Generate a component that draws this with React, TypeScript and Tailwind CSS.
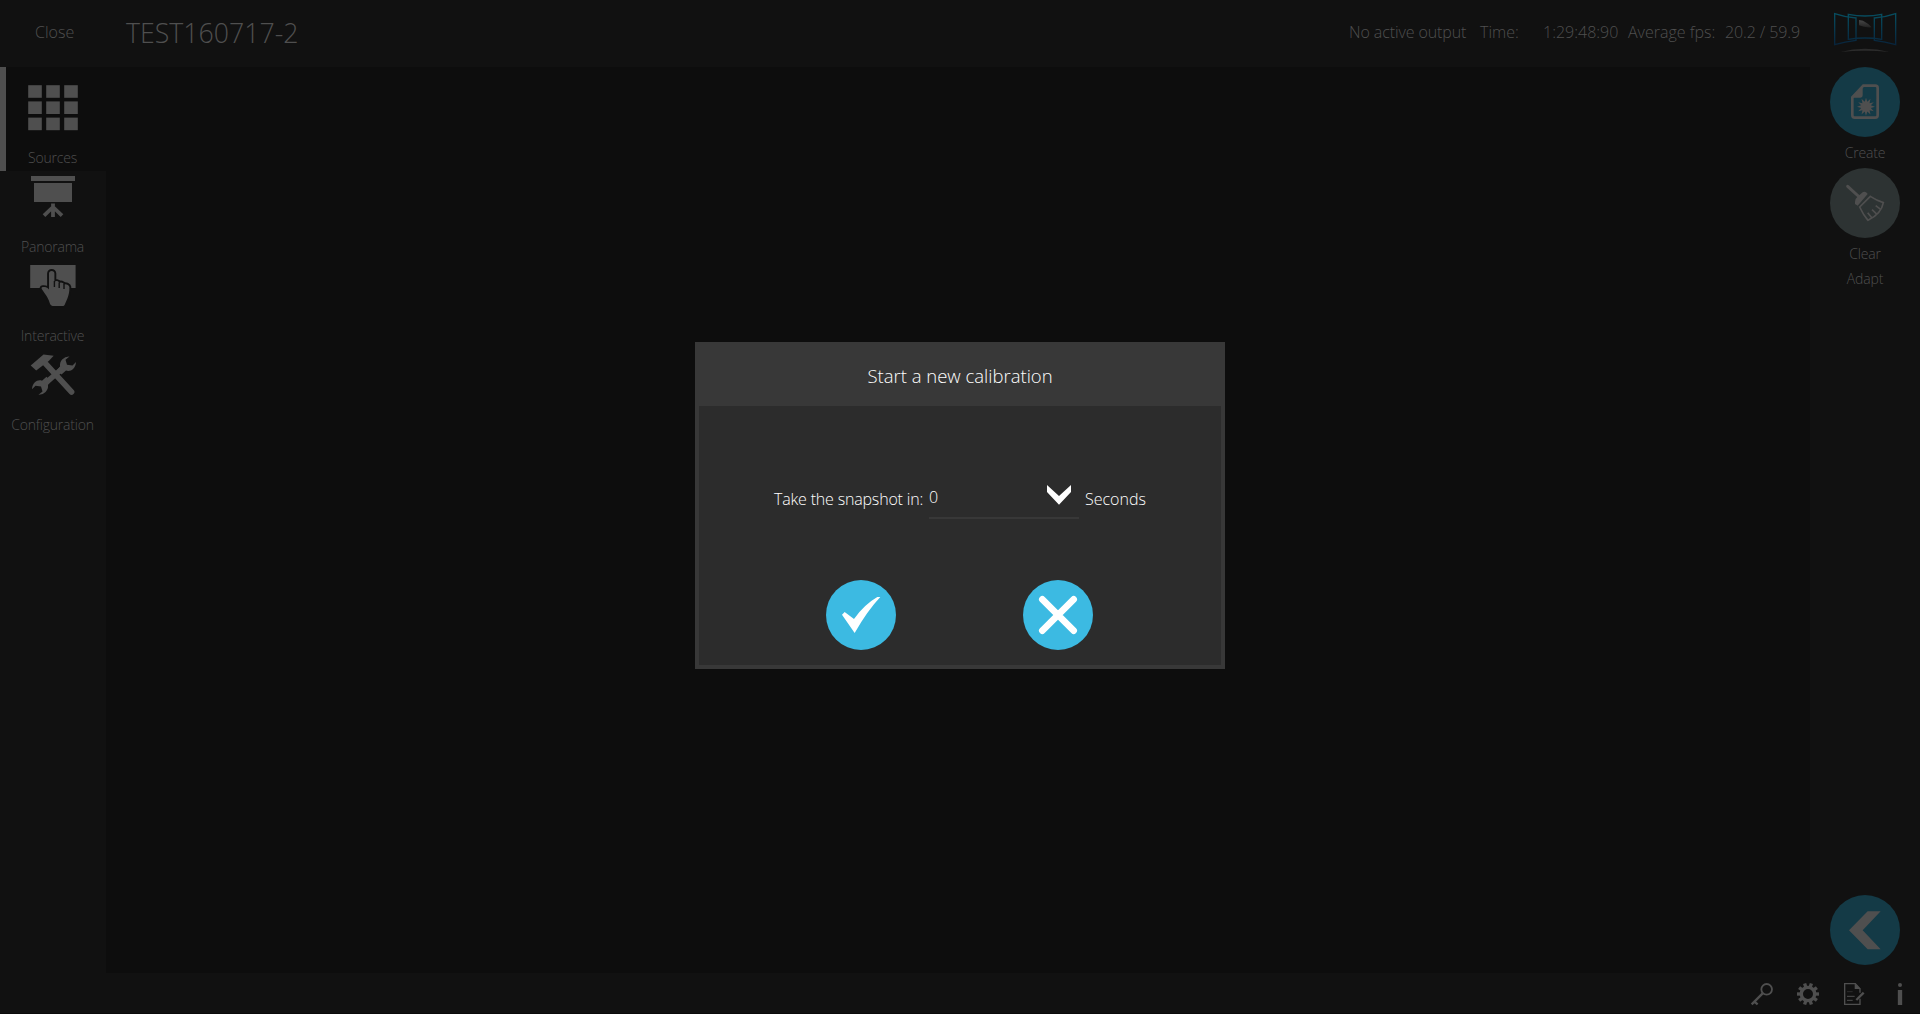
import type { ReactNode } from 'react'

const FONT = "font-['Open_Sans',sans-serif] font-light"

// points of a star outline around (cx, cy)
function starPoints(cx: number, cy: number, outer: number, inner: number, count: number) {
  return Array.from({ length: count * 2 }, (_, i) => {
    const r = i % 2 === 0 ? outer : inner
    const a = (Math.PI * i) / count - Math.PI / 2
    return `${(cx + r * Math.cos(a)).toFixed(1)},${(cy + r * Math.sin(a)).toFixed(1)}`
  }).join(' ')
}

function SourcesIcon() {
  return (
    <svg viewBox="0 0 60 60" className="size-[60px] shrink-0" fill="#4f4f4f">
      {[0, 1, 2].map((row) =>
        [0, 1, 2].map((col) => (
          <rect key={`${row}${col}`} x={5.2 + col * 18} y={3.2 + row * 16.2} width="13.6" height="12.6" />
        ))
      )}
    </svg>
  )
}

function PanoramaIcon() {
  return (
    <svg viewBox="0 0 60 60" className="size-[60px] shrink-0" fill="#4f4f4f">
      <rect x="8" y="5" width="44" height="5" />
      <rect x="11" y="12" width="38" height="19" />
      <path d="M30 32.5V46M30 36l-9 8.6M30 36l9 8.600" stroke="#4f4f4f" strokeWidth="3.8" fill="none" />
    </svg>
  )
}

function InteractiveIcon() {
  return (
    <svg viewBox="0 0 60 60" className="size-[60px] shrink-0" fill="#4f4f4f">
      <rect x="7.2" y="5" width="45.4" height="23" />
      <path
        d="M26 28V13.6a2.6 2.6 0 0 1 5.4 0V22c1-1.6 4.3-1.2 4.8.9 1.4-1 4.3-.5 4.8 1.5 1.5-.8 5.2.2 5.4 2.6.2 4-.6 8-2 11.500l-2.200 5c-.5 1.600-1 2.400-2 2.400H29.500c-1.500 0-2.300-1.200-2.800-2.800-.8-3-2.200-6-4.200-8.600l-3.600-5.200c-.8-1.300-.4-2 1-2.200 2.300-.2 4.400.3 6.100 2.300Z"
        stroke="#111111"
        strokeWidth="3.8"
        paintOrder="stroke"
      />
      <path d="M31.400 21v6M36.200 22.500v5.500M41 24v5" stroke="#111111" strokeWidth="1.400" />
    </svg>
  )
}

function ConfigurationIcon() {
  const jaw = 'M46.500 7.500A9 9 0 0 0 37 17.500L34 21l4.500 4.500 4.500-4C47 23 52.500 20.500 53 13l-3.500 3.500-5.500-.8-1.500-5z'
  return (
    <svg viewBox="0 0 60 60" className="size-[60px] shrink-0" fill="#4f4f4f">
      <path d={jaw} />
      <path d={jaw} transform="rotate(180 31 26.600)" />
      <path d="M40 19L22 34.500" stroke="#4f4f4f" strokeWidth="5.600" />
      <path d="M22 14L48.600 43" stroke="#4f4f4f" strokeWidth="5.600" strokeLinecap="round" />
      <path d="M7.700 16.500L20.500 5.400l10.200 1.300-4.700 5-12.800 9.700z" />
    </svg>
  )
}

function Logo() {
  return (
    <svg viewBox="0 0 360 171" className="w-[120px] h-[57px]" fill="none">
      <defs>
        <linearGradient id="frame" gradientUnits="userSpaceOnUse" x1="0" y1="40" x2="0" y2="134">
          <stop offset="0" stopColor="#074e60" />
          <stop offset="1" stopColor="#08243c" />
        </linearGradient>
        <linearGradient id="leaf" x1="0" y1="0" x2="0" y2="1">
          <stop offset="0" stopColor="#474747" />
          <stop offset="1" stopColor="#222222" />
        </linearGradient>
      </defs>
      <g stroke="url(#frame)" strokeWidth="4">
        <path d="M104 41Q136 52 168 54V121Q136 125 104 134Z" />
        <path d="M287 41Q255 52 223 54V121Q255 125 287 134Z" />
        <path d="M145 43Q195 53 245 43V118Q195 110 145 118Z" />
      </g>
      <path d="M177 60l12 2q16 8 26 20-20 2-38-6z" fill="url(#leaf)" />
      <path d="M122 156q73-20 146 0-73-8-146 0z" fill="#2b2b2b" />
    </svg>
  )
}

function CreateIcon() {
  return (
    <svg viewBox="0 0 210 210" className="size-[70px]">
      <path d="M100 56H136q7 0 7 7V145q0 7-7 7H74q-7 0-7-7V91z" fill="none" stroke="#4f4f4f" strokeWidth="8" />
      <path d="M98 54V84q0 8-8 8H66z" fill="#4f4f4f" />
      <polygon points={starPoints(108, 119, 27, 15, 12)} fill="#4f4f4f" />
    </svg>
  )
}

function BroomIcon() {
  return (
    <svg viewBox="0 0 210 210" className="size-[70px]" fill="none" stroke="#4f4f4f">
      <path d="M53 55L88 87" strokeWidth="9" strokeLinecap="round" />
      <path d="M75 101q0-9 7-14l14-13q7-5 14 0l3 4-30 35-8-5z" fill="#4f4f4f" stroke="none" />
      <path d="M89 117L121 85Q141 98 160 104Q154 138 114 157Q100 141 89 117Z" strokeWidth="5" />
      <path d="M113 134l13 16M126 125l15 14M137 113l15 11" strokeWidth="5" />
    </svg>
  )
}

function BackIcon() {
  return (
    <svg viewBox="0 0 210 210" className="size-[70px]" fill="#4f4f4f">
      <path d="M57 106L113 49H152L98 106L152 163H113Z" />
    </svg>
  )
}

function CheckIcon() {
  return (
    <svg viewBox="0 0 210 210" className="size-[70px]" fill="#ffffff">
      <path d="M48 104L56 96L84 117Q114 74 154 51H163Q124 92 86 159Z" />
    </svg>
  )
}

function CrossIcon() {
  return (
    <svg viewBox="0 0 210 210" className="size-[70px]">
      <path d="M58 58L152 152M152 58L58 152" stroke="#ffffff" strokeWidth="20" strokeLinecap="round" />
    </svg>
  )
}

const navItems: { label: string; icon: ReactNode }[] = [
  { label: 'Panorama', icon: <PanoramaIcon /> },
  { label: 'Interactive', icon: <InteractiveIcon /> },
  { label: 'Configuration', icon: <ConfigurationIcon /> },
]

function NavItem({ label, icon }: { label: string; icon: ReactNode }) {
  return (
    <div className="h-[89px] flex flex-col items-center">
      {icon}
      <span className="h-8 shrink-0 leading-[31px] pr-px text-[14px] tracking-[-0.2px]">{label}</span>
    </div>
  )
}

function FooterIcons() {
  return (
    <div className="h-[41px] flex justify-end gap-[22px] pt-[9px] pr-2 border-b border-[#0a0a0a]">
      <svg viewBox="0 0 72 72" className="size-6" fill="none" stroke="#4f4f4f">
        <circle cx="50" cy="22" r="16" strokeWidth="5.500" />
        <path d="M38 34L5 67M12 58l11 9" strokeWidth="7" />
      </svg>
      <svg viewBox="0 0 72 72" className="size-6">
        <circle cx="36" cy="36" r="20" fill="none" stroke="#4f4f4f" strokeWidth="10" />
        {Array.from({ length: 10 }, (_, i) => (
          <rect key={i} x="31" y="3" width="10" height="12" fill="#4f4f4f" transform={`rotate(${i * 36 + 18} 36 36)`} />
        ))}
      </svg>
      <svg viewBox="0 0 72 72" className="size-6" fill="none" stroke="#4f4f4f">
        <path d="M54 50V67H8V5H40L54 20V32" strokeWidth="4" />
        <path d="M38 4V21H56z" fill="#4f4f4f" stroke="none" />
        <path d="M15 43H38M15 55H32" strokeWidth="3" />
        <path d="M15 29H32" stroke="#2c2c2c" strokeWidth="3" />
        <path d="M43 54L65 32" strokeWidth="7" />
      </svg>
      <svg viewBox="0 0 72 72" className="size-6" fill="#4f4f4f">
        <circle cx="36" cy="9" r="6" />
        <rect x="29.500" y="24" width="13" height="45" />
      </svg>
    </div>
  )
}

function CalibrationDialog() {
  return (
    <div className="absolute left-[695px] top-[342px] w-[530px] h-[327px] flex flex-col bg-[#383838] px-1 pb-1 text-white">
      <h2 className="h-16 leading-[67px] text-center text-[18.5px]">Start a new calibration</h2>
      <div className="flex-1 bg-[#2c2c2c]">
        <div className="flex pt-[72px] pl-[75px] text-[16px]">
          <span className="w-[155px] h-[41px] leading-[43px] tracking-[-0.18px] whitespace-nowrap">
            Take the snapshot in:
          </span>
          <div className="w-[150px] h-[41px] flex justify-between pr-2 border-b-2 border-[#383838]">
            <span className="leading-[38px]">0</span>
            <svg viewBox="0 0 72 60" className="w-6 h-5 mt-[7px]" fill="#ffffff">
              <path d="M0 0L36 33L72 0V21L36 59L0 21Z" />
            </svg>
          </div>
          <span className="h-[41px] ml-1.5 leading-[43px]">Seconds</span>
        </div>
        <div className="flex gap-[127px] pt-[61px] pl-[127px]">
          <button className="size-[70px] rounded-full bg-[#3cbae2]">
            <CheckIcon />
          </button>
          <button className="size-[70px] rounded-full bg-[#3cbae2]">
            <CrossIcon />
          </button>
        </div>
      </div>
    </div>
  )
}

export default function App() {
  return (
    <div className={`${FONT} relative w-[1920px] h-[1014px] overflow-hidden flex flex-col bg-[#111111] text-[#4f4f4f]`}>
      <header className="h-[67px] flex text-[16px] leading-[65px] whitespace-nowrap">
        <span className="w-[126px] pl-[35px]">Close</span>
        <h1 className="flex-1 leading-[66px] text-[26.7px]">TEST160717-2</h1>
        <span className="w-[131px] tracking-[-0.1px]">No active output</span>
        <span className="w-[63px]">Time:</span>
        <span className="w-[85px]">1:29:48:90</span>
        <span className="w-[97px]">Average fps:</span>
        <span className="w-[75px] tracking-[-0.1px]">20.2 / 59.9</span>
        <Logo />
      </header>

      <div className="flex-1 flex">
        <nav className="w-[106px]">
          <div className="relative h-[104px] pt-[15px] bg-[#0d0d0d]">
            <div className="absolute left-0 top-0 w-1.5 h-full bg-[#4f4f4f]" />
            <NavItem label="Sources" icon={<SourcesIcon />} />
          </div>
          {navItems.map((item) => (
            <NavItem key={item.label} {...item} />
          ))}
        </nav>

        <main className="flex-1 bg-[#0d0d0d]" />

        <aside className="w-[110px] flex flex-col items-center text-[14px] tracking-[-0.15px]">
          <button className="size-[70px] rounded-full bg-[#143a46]">
            <CreateIcon />
          </button>
          <span className="h-[31px] leading-[32px]">Create</span>
          <button className="size-[70px] rounded-full bg-[#2d3333]">
            <BroomIcon />
          </button>
          <span className="h-[31px] leading-[31px]">Clear</span>
          <span className="leading-5">Adapt</span>
          <button className="size-[70px] mt-auto mb-2 rounded-full bg-[#143a46]">
            <BackIcon />
          </button>
        </aside>
      </div>

      <FooterIcons />
      <CalibrationDialog />
    </div>
  )
}
